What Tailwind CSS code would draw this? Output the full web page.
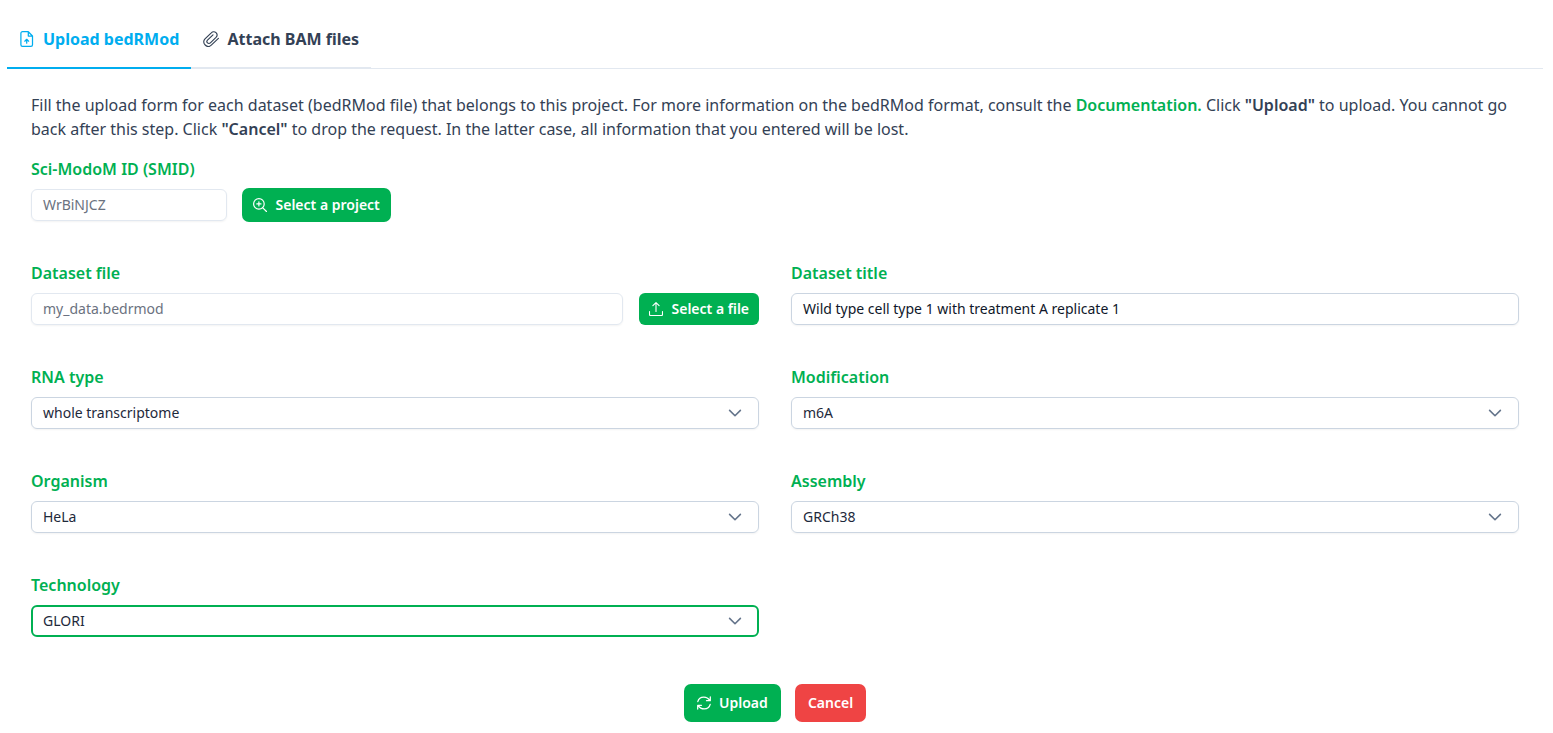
<!DOCTYPE html>
<html lang="en">
<head>
<meta charset="utf-8">
<title>Upload</title>
<script src="https://cdn.jsdelivr.net/npm/@tailwindcss/browser@4"></script>
</head>
<body class="bg-white font-['Noto_Sans',sans-serif] text-base text-[#334155]">
<svg class="hidden">
  <symbol id="chev" viewBox="0 0 14 14"><path d="M1.600 4.400 7 9.700l5.400-5.300" fill="none" stroke="currentColor" stroke-width="1.600" stroke-linecap="round" stroke-linejoin="round"/></symbol>
</svg>
<main class="pl-[7px] pr-[10px] pt-[10px]">
  <nav class="flex h-[59px] border-b border-[#e2e8f0] font-bold leading-6">
    <div class="flex h-[59px] w-[184px] shrink-0 items-center whitespace-nowrap border-b-2 border-[#00adef] pl-3 text-[#00adef]">
      <svg class="mr-2 size-4" viewBox="0 0 16 16" fill="none" stroke="currentColor" stroke-width="1.250" stroke-linecap="round" stroke-linejoin="round"><path d="M9.300.7H3.500a1.600 1.600 0 0 0-1.600 1.600v11.400a1.600 1.600 0 0 0 1.600 1.600h8.400a1.600 1.600 0 0 0 1.600-1.600V5zM9.300.7V5h4.200M7.700 12.200V8.500M5.800 10.200l1.900-1.900 1.900 1.900"/></svg>
      <span>Upload bedRMod</span>
    </div>
    <div class="flex h-[59px] w-[180px] shrink-0 items-center whitespace-nowrap border-b-2 border-[#e2e8f0] pl-3">
      <svg class="mr-[8.500px] size-4" viewBox="0 0 16 16" fill="none" stroke="currentColor" stroke-width="1.150" stroke-linecap="round" stroke-linejoin="round"><path d="M15.400 7.300 8.300 14.200C6.600 15.800 4 15.800 2.200 14 .3 12.200.3 9.600 2 7.900L8.300 1.800C9.600.4 11.700.4 13 1.700c1.300 1.300 1.300 3.300 0 4.700L7.400 11.900c-.8.8-2.100.8-2.900 0-.8-.8-.8-2 0-2.800L10 3.800"/></svg>
      <span>Attach BAM files</span>
    </div>
  </nav>
  <section class="px-6 pt-6">
    <p class="leading-6">Fill the upload form for each dataset (bedRMod file) that belongs to this project. For more information on the bedRMod format, consult the <span class="font-semibold text-[#00b052]">Documentation.</span> Click <span class="font-semibold">"Upload"</span> to upload. You cannot go<br>back after this step. Click <span class="font-semibold">"Cancel"</span> to drop the request. In the latter case, all information that you entered will be lost.</p>

    <div class="mt-4 h-[104px]">
      <div class="font-semibold leading-6 text-[#00b052]">Sci-ModoM ID (SMID)</div>
      <div class="mt-[7px] flex items-center">
        <div class="flex h-8 w-[196px] items-center rounded-md border border-[#e2e8f0] px-[11px] text-sm text-[#6b7280] shadow-[0_1px_2px_rgba(18,18,23,0.05)]">WrBiNJCZ</div>
        <button class="ml-[15px] flex h-[34px] w-[149px] items-center rounded-[7px] bg-[#00b052] pl-[11px] text-sm font-semibold whitespace-nowrap text-white">
          <svg class="mr-[8.500px] size-3.5" viewBox="0 0 14 14" fill="none" stroke="currentColor" stroke-width="1.200" stroke-linecap="round"><circle cx="5.900" cy="5.900" r="5.300"/><path d="m9.800 9.800 3.700 3.700M5.900 3.800V8M3.800 5.900H8"/></svg>
          Select a project
        </button>
      </div>
    </div>

    <div class="grid grid-cols-2 gap-x-8 [grid-auto-rows:104px]">
      <div>
        <div class="font-semibold leading-6 text-[#00b052]">Dataset file</div>
        <div class="mt-2 flex gap-4">
          <div class="flex h-8 flex-1 items-center rounded-md border border-[#e2e8f0] px-[11px] text-sm text-[#6b7280] shadow-[0_1px_2px_rgba(18,18,23,0.05)]">my_data.bedrmod</div>
          <button class="flex h-8 w-[120px] items-center rounded-md bg-[#00b052] pl-[10px] text-sm font-semibold whitespace-nowrap text-white">
            <svg class="mr-[8.500px] size-3.5" viewBox="0 0 14 14" fill="none" stroke="currentColor" stroke-width="1.100" stroke-linecap="round" stroke-linejoin="round"><path d="M.5 9.500v3a1 1 0 0 0 1 1h11a1 1 0 0 0 1-1v-3M7 9.500V.6M3.900 3.700 7 .6l3.100 3.100"/></svg>
            Select a file
          </button>
        </div>
      </div>
      <div>
        <div class="font-semibold leading-6 text-[#00b052]">Dataset title</div>
        <div class="mt-2 flex h-8 items-center rounded-md border border-[#cbd5e1] px-[11px] text-sm text-[#0f172a] shadow-[0_1px_2px_rgba(18,18,23,0.05)]">Wild type cell type 1 with treatment A replicate 1</div>
      </div>
      <div>
        <div class="font-semibold leading-6 text-[#00b052]">RNA type</div>
        <div class="mt-2 flex h-8 items-center justify-between rounded-md border border-[#cbd5e1] pl-[11px] pr-4 text-sm text-[#1e293b] shadow-[0_1px_2px_rgba(18,18,23,0.05)]">whole transcriptome<svg class="size-3.5 text-[#64748b]"><use href="#chev"/></svg></div>
      </div>
      <div>
        <div class="font-semibold leading-6 text-[#00b052]">Modification</div>
        <div class="mt-2 flex h-8 items-center justify-between rounded-md border border-[#cbd5e1] pl-[11px] pr-4 text-sm text-[#1e293b] shadow-[0_1px_2px_rgba(18,18,23,0.05)]">m6A<svg class="size-3.5 text-[#64748b]"><use href="#chev"/></svg></div>
      </div>
      <div>
        <div class="font-semibold leading-6 text-[#00b052]">Organism</div>
        <div class="mt-2 flex h-8 items-center justify-between rounded-md border border-[#cbd5e1] pl-[11px] pr-4 text-sm text-[#1e293b] shadow-[0_1px_2px_rgba(18,18,23,0.05)]">HeLa<svg class="size-3.5 text-[#64748b]"><use href="#chev"/></svg></div>
      </div>
      <div>
        <div class="font-semibold leading-6 text-[#00b052]">Assembly</div>
        <div class="mt-2 flex h-8 items-center justify-between rounded-md border border-[#cbd5e1] pl-[11px] pr-4 text-sm text-[#1e293b] shadow-[0_1px_2px_rgba(18,18,23,0.05)]">GRCh38<svg class="size-3.5 text-[#64748b]"><use href="#chev"/></svg></div>
      </div>
      <div>
        <div class="font-semibold leading-6 text-[#00b052]">Technology</div>
        <div class="mt-2 flex h-8 items-center justify-between rounded-md border-2 border-[#00b052] pl-[10px] pr-[15px] text-sm text-[#1e293b]">GLORI<svg class="size-3.5 text-[#64748b]"><use href="#chev"/></svg></div>
      </div>
    </div>

    <div class="mt-[7px] flex justify-center gap-[14px] text-sm font-semibold text-white">
      <button class="flex h-[38px] w-[97px] items-center rounded-[7px] bg-[#00b052] pl-[13px]">
        <svg class="mr-2 size-3.5" viewBox="0 0 14 14" fill="none" stroke="currentColor" stroke-width="1.250" stroke-linecap="round" stroke-linejoin="round"><path d="M.8 5.600C1.500 2.900 4 1.100 6.800 1.100c2.400 0 4.700 1.300 5.900 3.300M13.300.9v3.800H9.500M13.200 8.400c-.7 2.700-3.200 4.500-6 4.500-2.400 0-4.700-1.300-5.900-3.300M.7 13.100V9.300h3.800"/></svg>
        Upload
      </button>
      <button class="h-[38px] w-[71px] rounded-[7px] bg-[#ef4444]">Cancel</button>
    </div>
  </section>
</main>
</body>
</html>
